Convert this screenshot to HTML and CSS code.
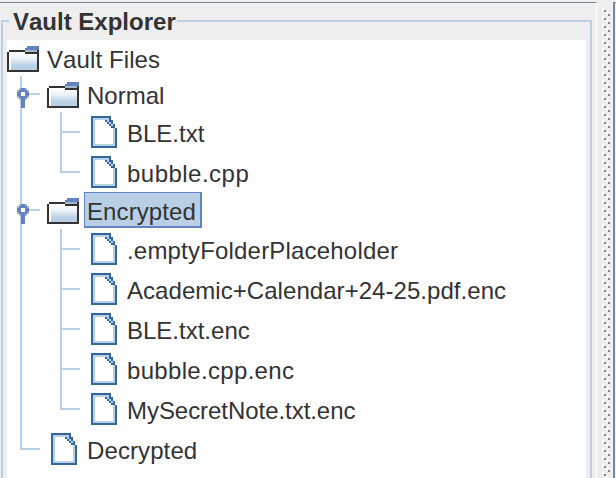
FILE: index.html
```
<!DOCTYPE html>
<html lang="en">
<head>
<meta charset="utf-8">
<title>Vault Explorer</title>
<link rel="stylesheet" href="styles.css">
</head>
<body>
<svg class="defs" width="0" height="0" aria-hidden="true">
  <defs>
    <linearGradient id="shade" x1="0" y1="0" x2="0" y2="1">
      <stop offset="0" stop-color="#ffffff"/>
      <stop offset=".35" stop-color="#eaf1f8"/>
      <stop offset=".55" stop-color="#cfdfef"/>
      <stop offset=".75" stop-color="#b8cfe5"/>
    </linearGradient>
    <symbol id="folder" viewBox="0 0 32 26">
      <path fill="#fff" d="M2 5h28v19H2z"/>
      <path fill="url(#shade)" d="M4 7h26v17H4z"/>
      <path fill="#333" d="M2 4h16v2H2zM0 6h2v20H0zM2 24h30v2H2zM30 4h2v20h-2zM18 6h12v2H18z"/>
      <path fill="#6382bf" d="M20 0h12v4H18V2h2z"/>
      <path fill="#a3b8cc" d="M18 4h12v2H18z"/>
    </symbol>
    <symbol id="file" viewBox="0 0 26 32">
      <path fill="#b8cfe5" d="M0 0h20v4h2v4h2v4h2v20H0z"/>
      <path fill="#fff" d="M4 4h10v2h2v2h2v2h2v2h2v16H4z"/>
      <path fill="#336699" d="M0 0h20v2H0zM0 2h2v30H0zM2 30h24v2H2zM24 12h2v18h-2zM18 2h2v4h-2zM14 4h2v2h-2zM16 6h2v2h-2zM20 4h2v4h-2zM18 8h2v2h-2zM22 8h2v4h-2zM20 10h2v2h-2z"/>
    </symbol>
    <symbol id="handle" viewBox="0 0 12 20">
      <path fill="#a3b8cc" d="M2 0h8v2h2v8h-2v2H2v-2H0V2h2z"/>
      <path fill="#6382bf" d="M4 0h4v2h2v2h2v4h-2v2H8v10H4V10H2V8H0V4h2V2h2z"/>
      <path fill="#fff" d="M4 4h4v4H4z"/>
    </symbol>
  </defs>
</svg>
<div class="window">
  <section class="explorer">
    <fieldset class="titled">
      <legend>Vault Explorer</legend>
      <div class="tree">
        <div class="row branch"><svg class="folder"><use href="#folder"/></svg><span class="label snug">Vault Files</span></div>
        <div class="row branch"><i class="guide tee"><svg class="handle"><use href="#handle"/></svg></i><svg class="folder"><use href="#folder"/></svg><span class="label">Normal</span></div>
        <div class="row"><i class="guide"></i><i class="guide tee"></i><svg class="file"><use href="#file"/></svg><span class="label">BLE.txt</span></div>
        <div class="row"><i class="guide"></i><i class="guide end"></i><svg class="file"><use href="#file"/></svg><span class="label wide">bubble.cpp</span></div>
        <div class="row branch last"><i class="guide tee"><svg class="handle"><use href="#handle"/></svg></i><svg class="folder"><use href="#folder"/></svg><span class="label snug selected">Encrypted</span></div>
        <div class="row"><i class="guide"></i><i class="guide tee"></i><svg class="file"><use href="#file"/></svg><span class="label loose">.emptyFolderPlaceholder</span></div>
        <div class="row"><i class="guide"></i><i class="guide tee"></i><svg class="file"><use href="#file"/></svg><span class="label long">Academic+Calendar+24-25.pdf.enc</span></div>
        <div class="row"><i class="guide"></i><i class="guide tee"></i><svg class="file"><use href="#file"/></svg><span class="label">BLE.txt.enc</span></div>
        <div class="row"><i class="guide"></i><i class="guide tee"></i><svg class="file"><use href="#file"/></svg><span class="label open">bubble.cpp.enc</span></div>
        <div class="row"><i class="guide"></i><i class="guide end"></i><svg class="file"><use href="#file"/></svg><span class="label tight">MySecretNote.txt.enc</span></div>
        <div class="row"><i class="guide end"></i><svg class="file"><use href="#file"/></svg><span class="label snug">Decrypted</span></div>
      </div>
    </fieldset>
  </section>
  <svg class="divider" width="16" height="476">
    <defs>
      <pattern id="grip" width="8" height="8" patternUnits="userSpaceOnUse">
        <path fill="#fff" d="M0 0h2v2H0zM4 4h2v2H4z"/>
        <path fill="#7a8a99" d="M2 2h2v2H2zM6 6h2v2H6z"/>
      </pattern>
    </defs>
    <g transform="translate(5 6)"><rect width="8" height="472" fill="url(#grip)"/></g>
  </svg>
  <div class="pane"></div>
</div>
</body>
</html>
```
FILE: styles.css
```
* { box-sizing: border-box; }
body {
  margin: 0;
  background: #eee;
  color: #333;
  font: 24px/30px "Liberation Sans", Arial, sans-serif;
  font-kerning: none;
  overflow: hidden;
}
.defs { display: block; height: 0; }
.window { display: flex; height: 478px; padding-top: 2px; }
.explorer {
  width: 597px;
  border-top: 1px solid #7a8a99;
  border-right: 1px solid #fff;
  padding: 6px 4px 0 1px;
}
.titled {
  margin: 0;
  height: 490px;
  min-width: 0;
  padding: 7px 4px 0;
  border: 2px solid #b8cfe5;
}
.titled legend {
  height: 24px;
  margin-left: 2px;
  padding: 0 1px 0 4px;
  font-weight: bold;
  line-height: 26px;
}
.tree { background: #fff; height: 460px; }
.row { display: flex; height: 40px; }
.branch { height: 36px; }
.last { height: 37px; }
.row > svg { flex: none; }
.folder { width: 32px; height: 26px; margin-top: 6px; }
.file { width: 26px; height: 32px; margin: 4px 2px 0 4px; }
.label {
  height: 40px;
  margin-left: 4px;
  padding: 4px 4px 0;
  line-height: 36px;
  white-space: nowrap;
}
.branch .label { height: 36px; padding-top: 2px; }
.branch .selected {
  width: 118px;
  margin-left: 5px;
  padding: 1px 0 0 2px;
  border: solid #6382bf;
  border-width: 1px 2px 2px 1px;
  background: #b8cfe5;
}
.tight { letter-spacing: -.05px; }
.long { letter-spacing: .05px; }
.snug { letter-spacing: .1px; }
.loose { letter-spacing: .19px; }
.open { letter-spacing: .32px; }
.wide { letter-spacing: .48px; }
.guide {
  flex: none;
  width: 40px;
  background: linear-gradient(#b8cfe5, #b8cfe5) 13px 0 / 2px 100% no-repeat;
}
.tee, .end {
  background: linear-gradient(#b8cfe5, #b8cfe5) 13px 0 / 2px 100% no-repeat,
    linear-gradient(#b8cfe5, #b8cfe5) 13px 19px / 20px 2px no-repeat;
}
.branch .tee { background-position: 13px 0, 13px 17px; }
.end { background-size: 2px 20px, 20px 2px; }
.handle { display: block; width: 12px; height: 20px; margin: 12px 0 0 10px; }
.divider { flex: none; }
.pane { flex: 1; border-top: 1px solid #7a8a99; border-left: 2px solid #7a8a99; }
```
